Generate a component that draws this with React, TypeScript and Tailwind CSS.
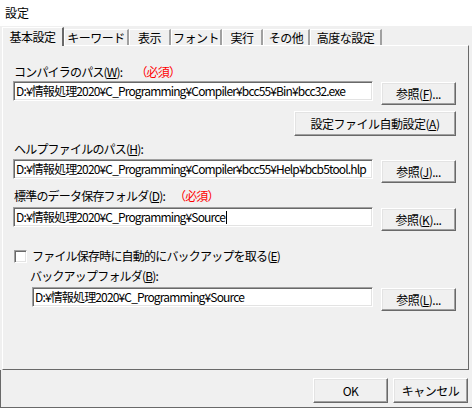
import React from "react";

const font = "font-['Noto_Sans_CJK_JP','Noto_Sans_CJK_SC',sans-serif]";

const tabs = [
  { name: "基本設定", w: "w-[62px]", active: true },
  { name: "キーワード", w: "w-[65px]" },
  { name: "表示", w: "w-[42px]" },
  { name: "フォント", w: "w-[51px]" },
  { name: "実行", w: "w-[41px]" },
  { name: "その他", w: "w-[47px]" },
  { name: "高度な設定", w: "w-[72px]" },
];

// classic raised button
function Btn({ children, className = "" }: { children: React.ReactNode; className?: string }) {
  return (
    <div
      className={`flex items-center justify-center bg-[#f0f0f0] border border-t-white border-l-white border-r-[#696969] border-b-[#696969] shadow-[inset_-1px_-1px_0_#a0a0a0,inset_1px_1px_0_#e3e3e3] text-[12px] leading-[14px] tracking-[-0.5px] ${className}`}
    >
      {children}
    </div>
  );
}

// classic sunken edit box
function Edit({ value, className = "", caret }: { value: string; className?: string; caret?: boolean }) {
  return (
    <div
      className={`flex items-center h-[20px] pl-[2px] bg-white border border-t-[#a0a0a0] border-l-[#a0a0a0] border-r-white border-b-white shadow-[inset_1px_1px_0_#696969,inset_-1px_-1px_0_#e3e3e3] text-[12px] leading-[14px] tracking-[-0.85px] whitespace-nowrap overflow-hidden ${className}`}
    >
      {value}
      {caret && <span className="inline-block w-px h-[13px] ml-px bg-black" />}
    </div>
  );
}

function Browse({ k }: { k: string }) {
  return (
    <Btn className="w-[75px] h-[23px] ml-[8px] mt-[1px]">
      参照(<u>{k}</u>)...
    </Btn>
  );
}

export default function App() {
  return (
    <div className={`w-[472px] h-[408px] bg-[#f0f0f0] flex flex-col text-black ${font}`}>
      <div className="h-[26px] bg-white pl-[5px] flex items-center text-[12px] leading-[14px]">設定</div>

      {/* tab strip */}
      <div className="h-[19px] pl-[2px] flex items-end relative z-10 tracking-[-0.5px]">
        {tabs.map((t) =>
          t.active ? (
            <div
              key={t.name}
              className={`${t.w} h-[19px] -mb-px bg-[#f0f0f0] border-t border-l border-t-white border-l-white border-r-2 border-r-[#696969] flex items-center justify-center text-[12px] leading-[14px]`}
            >
              {t.name}
            </div>
          ) : (
            <div
              key={t.name}
              className={`${t.w} h-[16px] border-t border-l border-t-white border-l-white border-r-2 border-r-[#a0a0a0] flex items-center justify-center text-[12px] leading-[14px]`}
            >
              {t.name}
            </div>
          )
        )}
      </div>

      {/* tab panel */}
      <div className="ml-[2px] w-[467px] h-[325px] border border-t-white border-l-white border-r-[#696969] border-b-[#696969] flex flex-col text-[12px] leading-[14px] tracking-[-0.8px]">
        <div className="mt-[19px] ml-[11px] flex">
          <span>
            コンパイラのパス(<u>W</u>):
          </span>
          <span className="ml-[13px] text-[#ff0000]">（必須）</span>
        </div>
        <div className="mt-[2px] ml-[10px] flex items-start">
          <Edit className="w-[360px]" value="D:¥情報処理2020¥C_Programming¥Compiler¥bcc55¥Bin¥bcc32.exe" />
          <Browse k="F" />
        </div>
        <Btn className="self-end mr-[12px] mt-[6px] w-[162px] h-[25px]">
          設定ファイル自動設定(<u>A</u>)
        </Btn>

        <div className="mt-[6px] ml-[11px]">
          ヘルプファイルのパス(<u>H</u>):
        </div>
        <div className="mt-[3px] ml-[10px] flex items-start">
          <Edit className="w-[360px]" value="D:¥情報処理2020¥C_Programming¥Compiler¥bcc55¥Help¥bcb5tool.hlp" />
          <Browse k="J" />
        </div>

        <div className="mt-[6px] ml-[11px] flex">
          <span>
            標準のデータ保存フォルダ(<u>D</u>):
          </span>
          <span className="ml-[9px] text-[#ff0000]">（必須）</span>
        </div>
        <div className="mt-[4px] ml-[10px] flex items-start">
          <Edit className="w-[360px]" value="D:¥情報処理2020¥C_Programming¥Source" caret />
          <Browse k="K" />
        </div>

        <div className="mt-[18px] ml-[11px] flex items-center h-[14px]">
          <div className="w-[13px] h-[13px] bg-white border border-t-[#a0a0a0] border-l-[#a0a0a0] border-r-white border-b-white shadow-[inset_1px_1px_0_#696969,inset_-1px_-1px_0_#e3e3e3]" />
          <span className="ml-[5px]">
            ファイル保存時に自動的にバックアップを取る(<u>E</u>)
          </span>
        </div>
        <div className="mt-[6px] ml-[27px]">
          バックアップフォルダ(<u>B</u>):
        </div>
        <div className="mt-[4px] ml-[29px] flex items-start">
          <Edit className="w-[341px]" value="D:¥情報処理2020¥C_Programming¥Source" />
          <Browse k="L" />
        </div>
      </div>

      {/* dialog buttons */}
      <div className="flex-1 flex justify-end items-start pt-[8px] pr-[4px] gap-[5px] border-l border-b border-[#696969]">
        <Btn className="w-[75px] h-[25px]">OK</Btn>
        <Btn className="w-[75px] h-[25px]">キャンセル</Btn>
      </div>
    </div>
  );
}
